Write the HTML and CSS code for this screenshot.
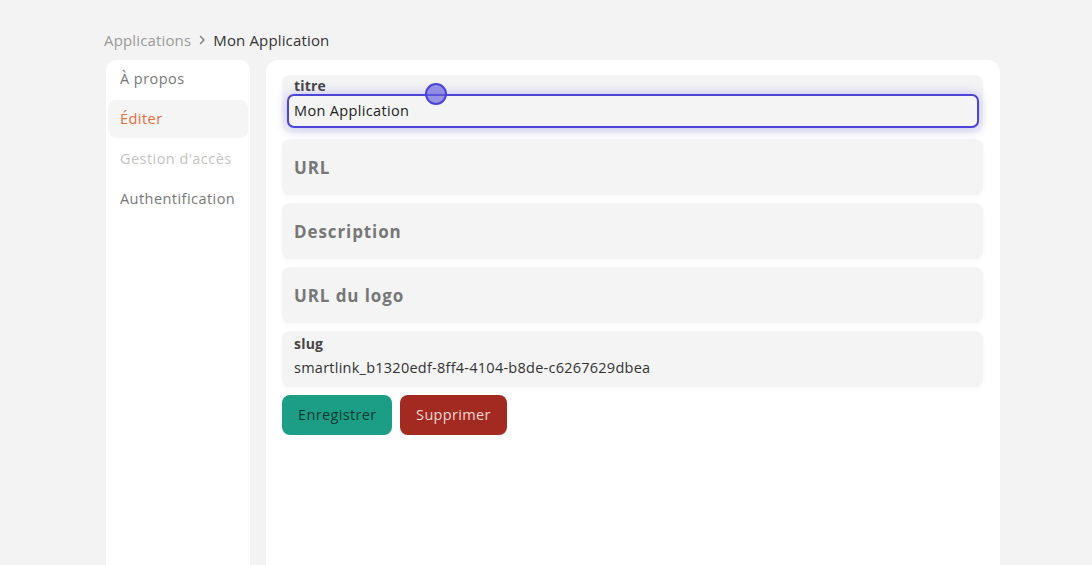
FILE: index.html
```html
<!DOCTYPE html>
<html lang="fr">
<head>
<meta charset="utf-8">
<link rel="stylesheet" href="styles.css">
</head>
<body>
<div class="page">
  <nav class="crumbs">
    <span class="crumb-muted">Applications</span>
    <svg class="chev" width="12" height="12" viewBox="0 0 12 12"><path d="M4.5 2.5 L8 6 L4.5 9.5" fill="none" stroke="#777" stroke-width="1.4" stroke-linecap="round" stroke-linejoin="round"/></svg>
    <span class="crumb-current">Mon Application</span>
  </nav>
  <div class="layout">
    <aside class="side">
      <div class="side-item">À propos</div>
      <div class="side-item active">Éditer</div>
      <div class="side-item disabled">Gestion d'accès</div>
      <div class="side-item">Authentification</div>
    </aside>
    <main class="card">
      <div class="field">
        <div class="label">titre</div>
        <div class="input focused">Mon Application<span class="cursor"></span></div>
      </div>
      <div class="field empty"><span class="ph">URL</span></div>
      <div class="field empty"><span class="ph">Description</span></div>
      <div class="field empty"><span class="ph">URL du logo</span></div>
      <div class="field slug">
        <div class="label">slug</div>
        <div class="value">smartlink_b1320edf-8ff4-4104-b8de-c6267629dbea</div>
      </div>
      <div class="actions">
        <button class="btn save">Enregistrer</button>
        <button class="btn del">Supprimer</button>
      </div>
    </main>
  </div>
</div>
</body>
</html>
```
FILE: styles.css
```css
* { box-sizing: border-box; }
html, body { margin: 0; height: 100%; }
body {
  background: #f3f3f4;
  font-family: "Open Sans", "DejaVu Sans", sans-serif;
  color: #333;
  overflow: hidden;
}
.page { padding: 29px 0 0 104px; width: 1000px; }
.crumbs {
  display: flex; align-items: center; gap: 5px;
  font-size: 15px; height: 22px; letter-spacing: 0.15px;
}
.crumb-muted { color: #9a9a9a; }
.crumb-current { color: #333; }
.chev { margin: 0; }
.layout { display: flex; gap: 16px; margin-top: 9px; padding-left: 2px; }
.side {
  width: 144px; height: 520px; background: #fff; border-radius: 10px 10px 0 0;
  padding: 0 2px;
}
.side-item {
  height: 38px; display: flex; align-items: center; padding-left: 12px; padding-bottom: 2px;
  font-size: 14.5px; letter-spacing: 0.45px; color: #777; margin-bottom: 2px; border-radius: 8px;
}
.side-item.active { background: #f5f5f5; color: #e2703a; }
.side-item.disabled { color: #c4c4c4; }
.card {
  flex: 1; height: 520px; background: #fff; border-radius: 12px 12px 0 0;
  padding: 15px 17px 0 16px;
}
.field {
  background: #f4f4f5; border-radius: 8px; margin-bottom: 8px;
  box-shadow: 0 2px 6px rgba(0,0,0,0.03);
}
.field:first-child { padding: 2px 4px 5px 5px; margin-bottom: 6px; }
.label { font-weight: 700; font-size: 14px; color: #444; line-height: 17px; padding-left: 7px; letter-spacing: 0.2px; }
.input {
  position: relative;
  height: 34px; border: 2.5px solid #4b44d6; border-radius: 7px;
  display: flex; align-items: center; padding-left: 5px; padding-bottom: 2px;
  font-size: 14.5px; letter-spacing: 0.35px; color: #222; background: #f4f4f5;
  box-shadow: 0 0 12px rgba(90,80,230,0.35);
}
.cursor {
  position: absolute; left: 136px; top: -13px;
  width: 22px; height: 22px; border-radius: 50%;
  background: rgba(100,95,220,0.65); border: 2px solid #4b44d6;
}
.field.empty {
  height: 56px; display: flex; align-items: center; padding-left: 12px;
}
.ph { font-weight: 700; font-size: 17px; color: #777; letter-spacing: 0.9px; }
.field.slug { height: 56px; padding: 2px 12px 0; }
.field.slug .label { padding-left: 0; padding-top: 2px; }
.value { font-size: 14.5px; color: #333; margin-top: 6px; letter-spacing: 0.25px; }
.actions { display: flex; gap: 8px; }
.btn {
  height: 40px; border: none; border-radius: 8px; font-family: inherit;
  font-size: 14.5px; letter-spacing: 0.35px; padding: 0 16px 1px;
}
.save { background: #1c9e86; color: #0e3b31; width: 110px; }
.del { background: #a22a20; color: #f3d6d3; width: 107px; }
```
